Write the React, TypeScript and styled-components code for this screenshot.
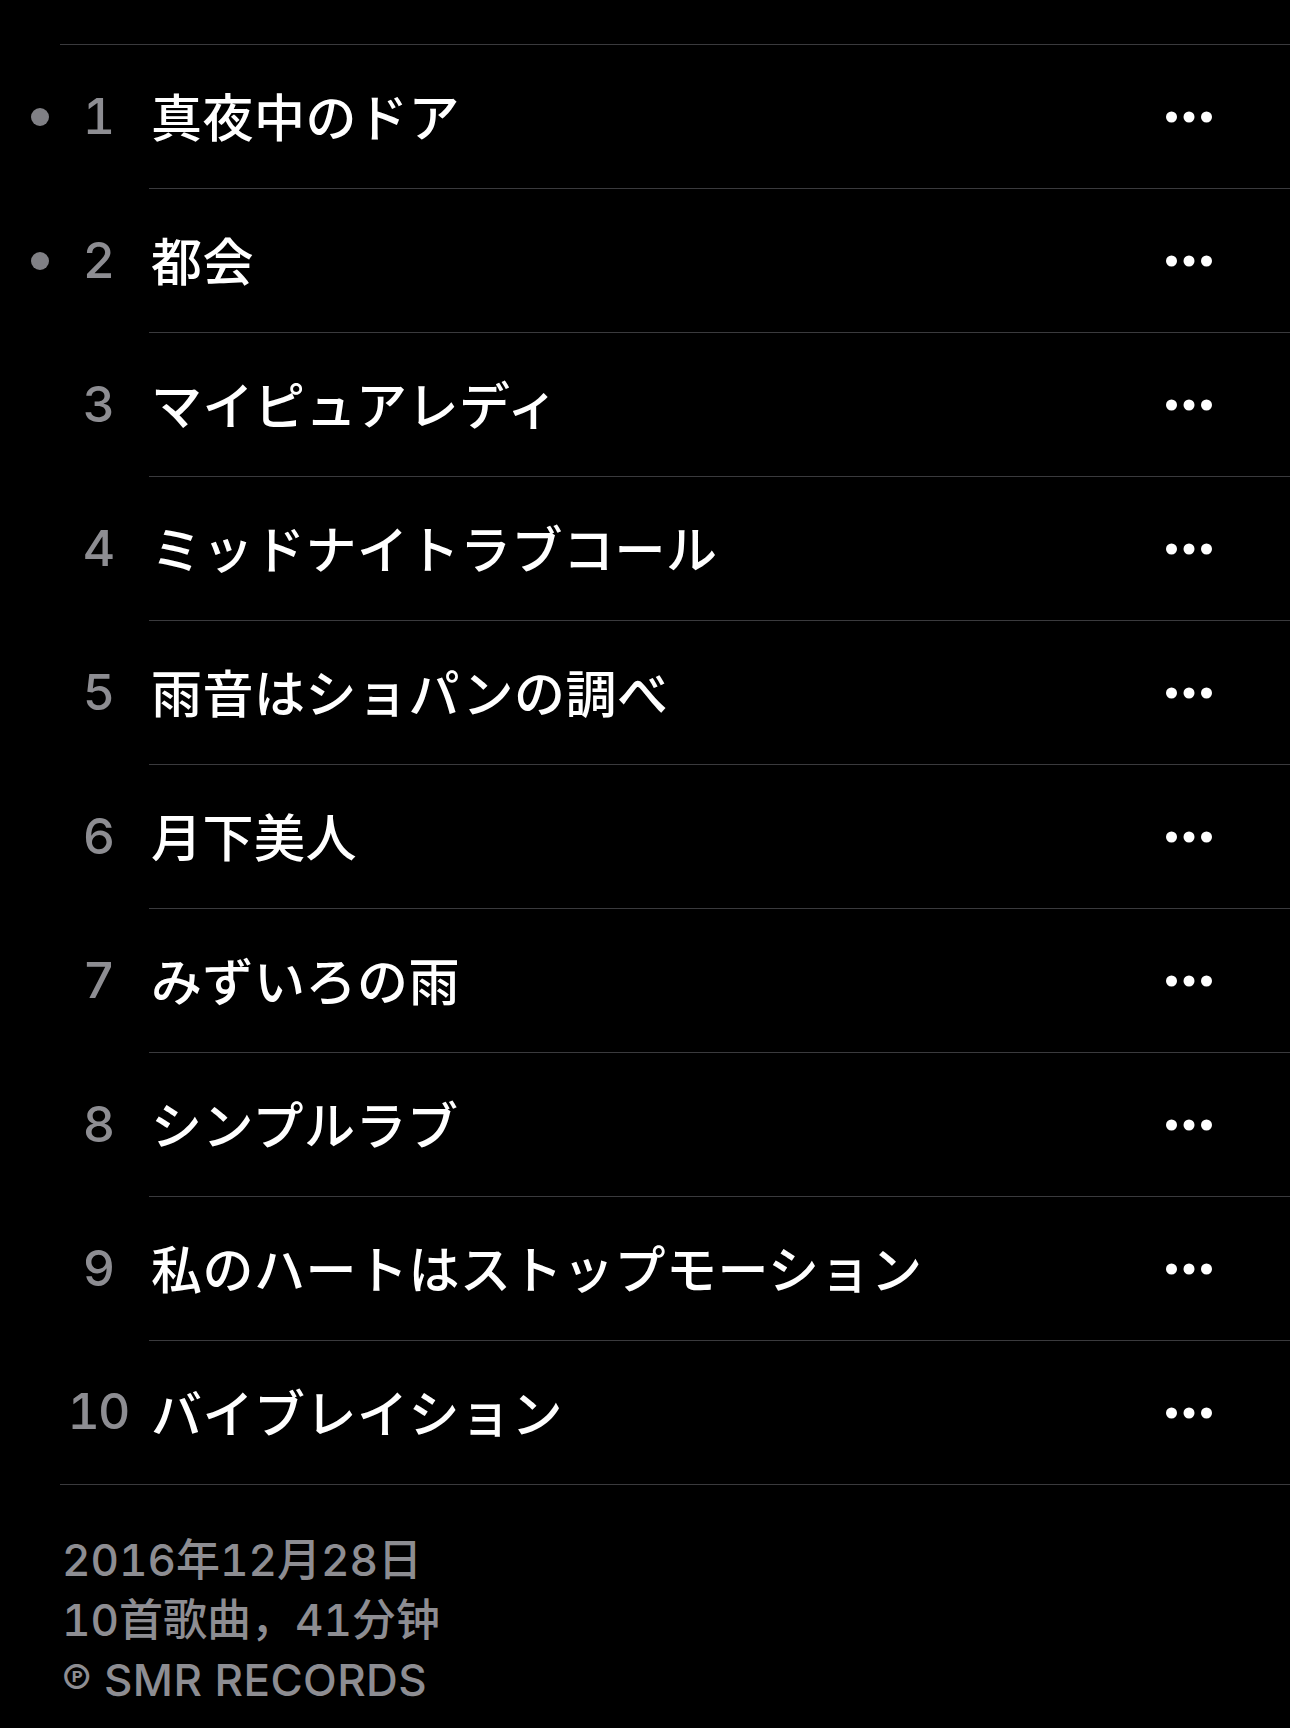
import React from "react";
import styled, { createGlobalStyle } from "styled-components";

const GlobalStyle = createGlobalStyle`
  html, body {
    margin: 0;
    padding: 0;
    background: #000;
  }
  body {
    min-height: 1728px;
    font-family: Inter, "Noto Sans CJK JP", "Noto Sans", sans-serif;
    -webkit-font-smoothing: antialiased;
  }
`;

const Page = styled.main`
  padding-top: 44px;
  background: #000;
  min-height: 1728px;
  box-sizing: border-box;
`;

const Divider = styled.div`
  height: 1px;
  margin-left: 60px;
  background: #3a3a3d;
`;

const TrackList = styled.ol`
  list-style: none;
  margin: 0;
  padding: 0;
`;

const Row = styled.li`
  display: flex;
  align-items: stretch;
`;

const Indicator = styled.div`
  flex: none;
  width: 60px;
  display: flex;
  align-items: center;
`;

const Dot = styled.span`
  width: 18px;
  height: 18px;
  margin-left: 31px;
  border-radius: 50%;
  background: #808085;
`;

const Number = styled.div`
  flex: none;
  width: 76px;
  display: flex;
  align-items: center;
  justify-content: center;
  padding-bottom: 3px;
  box-sizing: border-box;
  font-family: Inter, "Noto Sans", sans-serif;
  font-size: 50px;
  font-weight: 500;
  font-variant-numeric: tabular-nums;
  letter-spacing: -2px;
  color: #8d8d92;
`;

const Body = styled.div<{ $last: boolean }>`
  flex: 1;
  height: 143px;
  margin-left: 13px;
  display: flex;
  align-items: center;
  border-bottom: ${(p) => (p.$last ? "none" : "1px solid #3a3a3d")};
`;

const Title = styled.span`
  flex: 1;
  padding: 0 0 4px 2px;
  font-family: "Noto Sans CJK JP", sans-serif;
  font-size: 51px;
  font-weight: 500;
  letter-spacing: 0.5px;
  color: #fff;
  white-space: nowrap;
`;

const MoreButton = styled.button`
  flex: none;
  display: flex;
  align-items: center;
  justify-content: center;
  margin-right: 77px;
  padding: 0;
  border: none;
  background: transparent;
  cursor: pointer;
`;

const Footer = styled.footer`
  padding: 45px 0 0 62px;
  font-family: Inter, "Noto Sans CJK SC", sans-serif;
  font-size: 44px;
  font-weight: 500;
  font-variant-numeric: tabular-nums;
  line-height: 60px;
  color: #8d8d92;
`;

const FooterLine = styled.div`
  white-space: nowrap;
`;

const Label = styled.span`
  letter-spacing: 0.4px;
`;

const tracks = [
  { n: 1, title: "真夜中のドア", downloaded: true },
  { n: 2, title: "都会", downloaded: true },
  { n: 3, title: "マイピュアレディ" },
  { n: 4, title: "ミッドナイトラブコール" },
  { n: 5, title: "雨音はショパンの調べ" },
  { n: 6, title: "月下美人" },
  { n: 7, title: "みずいろの雨" },
  { n: 8, title: "シンプルラブ" },
  { n: 9, title: "私のハートはストップモーション" },
  { n: 10, title: "バイブレイション" },
];

const MoreIcon = () => (
  <svg width="47" height="12" viewBox="0 0 47 12" aria-hidden="true">
    <circle cx="5.5" cy="6" r="5.5" fill="#fff" />
    <circle cx="23" cy="6" r="5.5" fill="#fff" />
    <circle cx="40.5" cy="6" r="5.5" fill="#fff" />
  </svg>
);

export default function App() {
  return (
    <>
      <GlobalStyle />
      <Page>
        <Divider />
        <TrackList>
          {tracks.map((t, i) => (
            <Row key={t.n}>
              <Indicator>{t.downloaded && <Dot />}</Indicator>
              <Number>{t.n}</Number>
              <Body $last={i === tracks.length - 1}>
                <Title>{t.title}</Title>
                <MoreButton aria-label="更多">
                  <MoreIcon />
                </MoreButton>
              </Body>
            </Row>
          ))}
        </TrackList>
        <Divider />
        <Footer>
          <FooterLine>2016年12月28日</FooterLine>
          <FooterLine>10首歌曲，41分钟</FooterLine>
          <FooterLine>
            <Label>℗ SMR RECORDS</Label>
          </FooterLine>
        </Footer>
      </Page>
    </>
  );
}
